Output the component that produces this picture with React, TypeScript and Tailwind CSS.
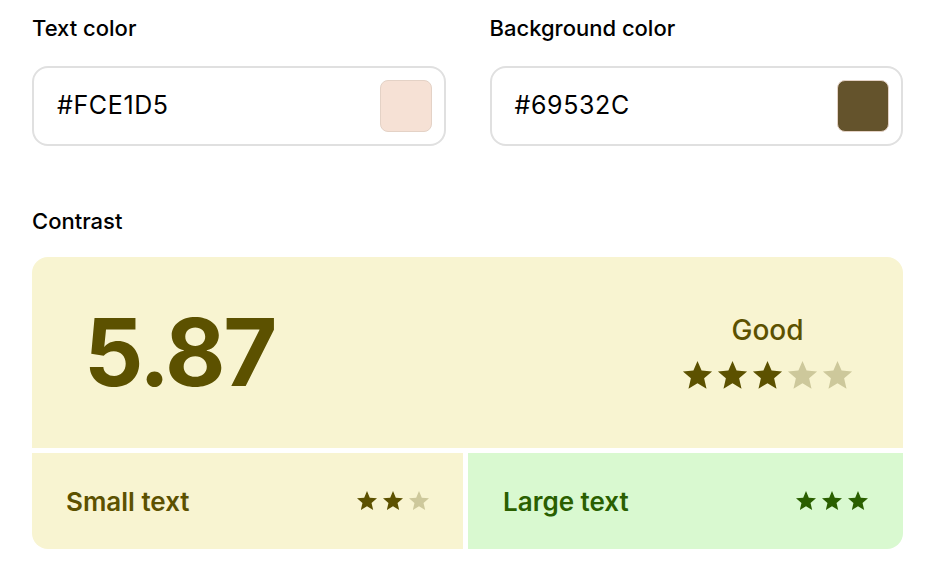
const font = { fontFamily: "Inter, 'Noto Sans', sans-serif" };

function Star({ size, color }: { size: number; color: string }) {
  return (
    <svg width={size} height={size} viewBox="0 0 24 24" fill={color}>
      <path d="M12 17.27L18.18 21l-1.64-7.03L22 9.24l-7.19-.61L12 2 9.19 8.63 2 9.24l5.46 4.73L5.82 21z" />
    </svg>
  );
}

function ColorField({ label, value, swatch }: { label: string; value: string; swatch: string }) {
  return (
    <div className="flex flex-col gap-6 flex-1">
      <span className="text-[22px] font-medium text-black leading-7">{label}</span>
      <div className="h-20 rounded-2xl border-2 border-[#e0e0e0] bg-white flex items-center justify-between pl-[23px] pr-3">
        <span className="text-[25px] text-black tracking-wide">{value}</span>
        <div className="w-[52px] h-[52px] rounded-lg border border-[#e4d2c6]" style={{ backgroundColor: swatch }} />
      </div>
    </div>
  );
}

export default function App() {
  const dark = "#5c5100";
  const faded = "#cdc89b";
  return (
    <div className="w-[931px] h-[576px] bg-white px-8 pt-[14px]" style={font}>
      <div className="flex gap-[44px] w-[871px]">
        <ColorField label="Text color" value="#FCE1D5" swatch="#f6e1d5" />
        <ColorField label="Background color" value="#69532C" swatch="#64532c" />
      </div>

      <div className="mt-[61px] text-[22px] font-medium text-black leading-7">Contrast</div>

      <div className="mt-[22px] w-[871px] rounded-2xl overflow-hidden flex flex-col gap-[5px]">
        <div className="h-[191px] bg-[#f8f4d1] flex items-center justify-between pl-[52px] pr-[48px]">
          <span className="text-[93px] font-bold leading-none tracking-tight" style={{ color: dark }}>5.87</span>
          <div className="flex flex-col items-center gap-[10px]">
            <span className="text-[28px] font-medium leading-9" style={{ color: dark }}>Good</span>
            <div className="flex">
              <Star size={35} color={dark} />
              <Star size={35} color={dark} />
              <Star size={35} color={dark} />
              <Star size={35} color={faded} />
              <Star size={35} color={faded} />
            </div>
          </div>
        </div>
        <div className="flex h-[96px] gap-[5px]">
          <div className="w-[431px] bg-[#f8f4d1] flex items-center justify-between pl-[34px] pr-[32px]">
            <span className="text-[26px] font-semibold" style={{ color: dark }}>Small text</span>
            <div className="flex gap-[2px]">
              <Star size={24} color={dark} />
              <Star size={24} color={dark} />
              <Star size={24} color={faded} />
            </div>
          </div>
          <div className="flex-1 bg-[#d9f9d0] flex items-center justify-between pl-[35px] pr-[33px]">
            <span className="text-[26px] font-semibold text-[#2a5f00]">Large text</span>
            <div className="flex gap-[2px]">
              <Star size={24} color="#2a5f00" />
              <Star size={24} color="#2a5f00" />
              <Star size={24} color="#2a5f00" />
            </div>
          </div>
        </div>
      </div>
    </div>
  );
}
